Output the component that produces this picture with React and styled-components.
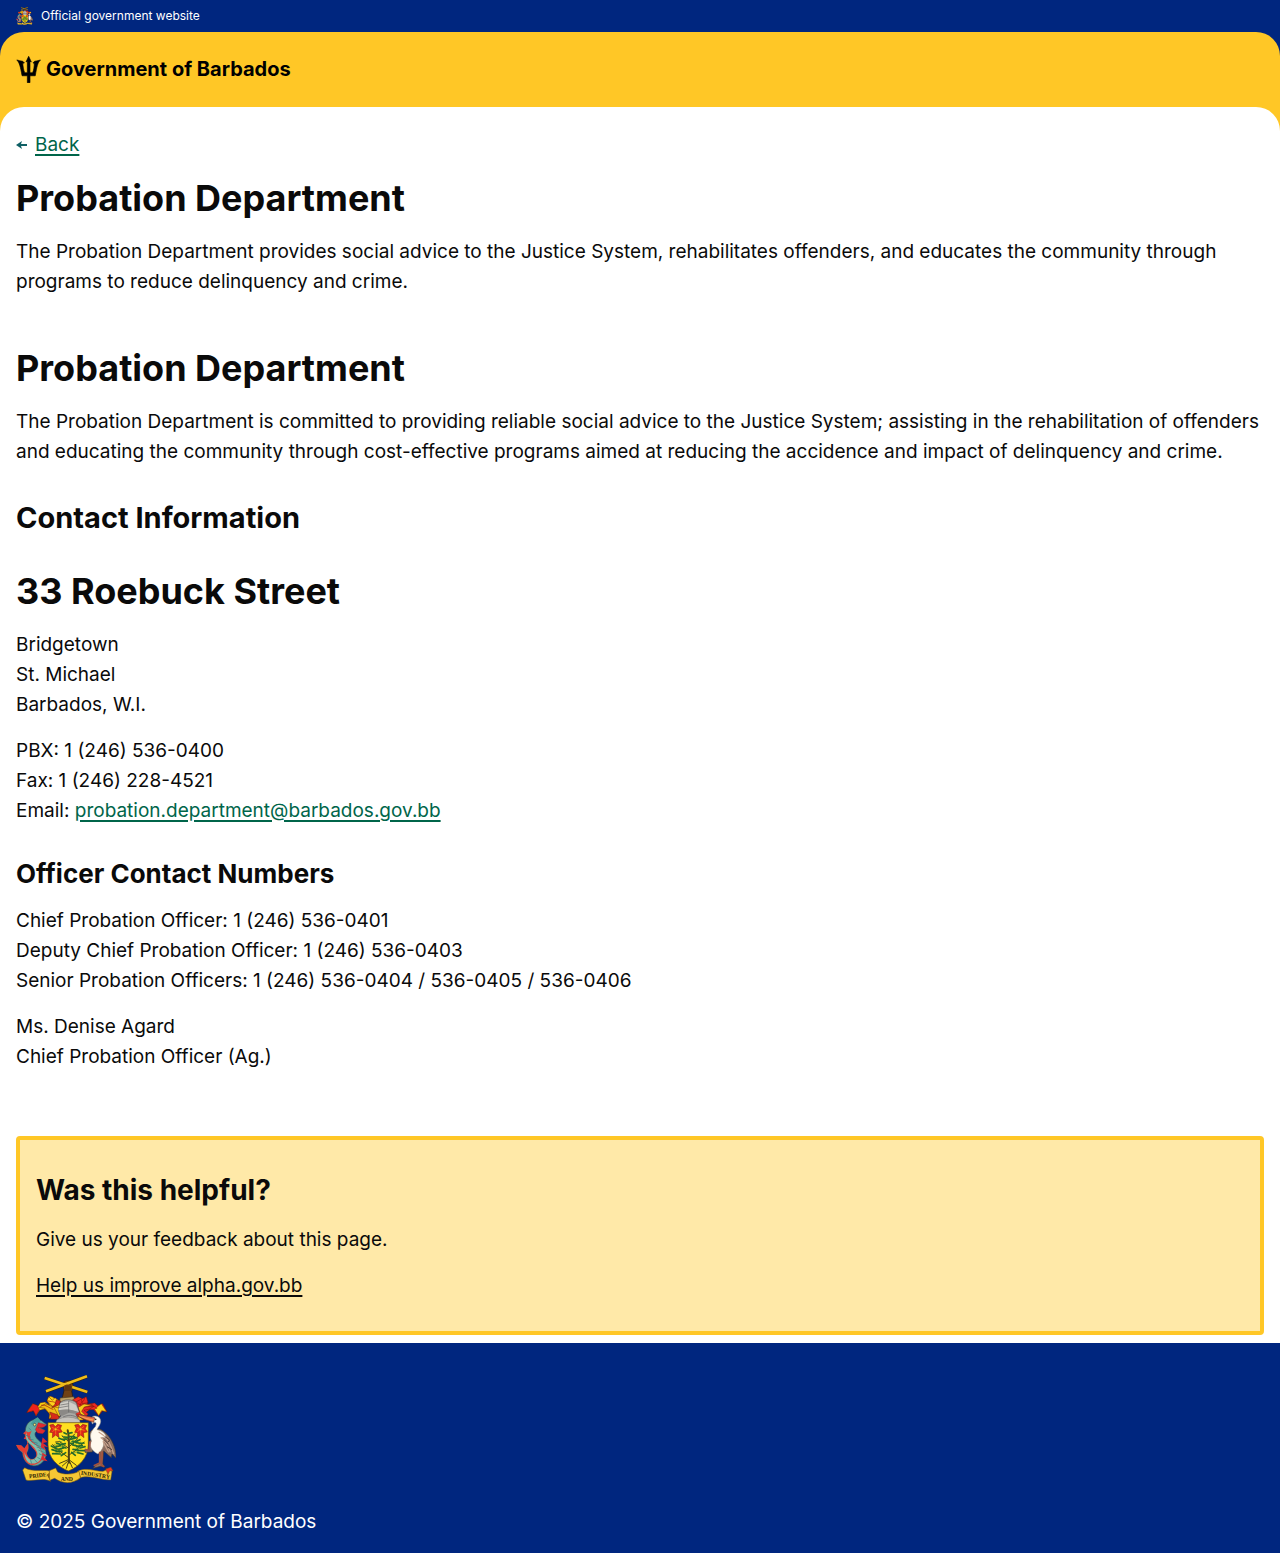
import React from "react";
import styled, { createGlobalStyle } from "styled-components";

const color = {
  navy: "#00267f",
  gold: "#ffc726",
  sand: "#ffe9a8",
  green: "#00654a",
  teal: "#0e5f64",
  ink: "#0a0a0a",
};

const GlobalStyle = createGlobalStyle`
  *, *::before, *::after { box-sizing: border-box; }
  body {
    margin: 0;
    background: #fff;
    color: ${color.ink};
    font-family: Inter, "Open Sans", sans-serif;
    font-size: 19px;
    line-height: 30px;
  }
`;

const Banner = styled.div`
  display: flex;
  align-items: center;
  gap: 8px;
  height: 32px;
  padding: 0 16px;
  background: ${color.navy};
  color: #fff;
  font-size: 12px;
  line-height: 16px;
`;

const HeaderBackdrop = styled.div`
  background: ${color.navy};
`;

const Header = styled.header`
  display: flex;
  padding: 24px 16px;
  background: ${color.gold};
  border-radius: 24px 24px 0 0;
`;

const Brand = styled.a`
  display: flex;
  align-items: center;
  gap: 5px;
  color: #000;
  font-size: 20px;
  font-weight: 700;
  line-height: 27px;
  text-decoration: none;
`;

const MainBackdrop = styled.div`
  background: ${color.gold};
`;

const Main = styled.main`
  padding: 24px 16px 8px;
  background: #fff;
  border-radius: 24px 24px 0 0;
`;

const Link = styled.a`
  color: ${(p) => (p.$plain ? color.ink : color.green)};
  text-decoration: underline;
  text-decoration-thickness: 2px;
  text-underline-offset: 3px;
`;

const BackNav = styled.nav`
  display: flex;
  align-items: center;
  gap: 8px;
  line-height: 28px;
  margin-bottom: 16px;
`;

const PageIntro = styled.section`
  margin-bottom: 48px;
`;

const Article = styled.article`
  margin-bottom: 64px;
`;

const Title = styled.h1`
  margin: 0 0 16px;
  font-size: 36px;
  font-weight: 700;
  line-height: 46px;
`;

const Heading = styled.h2`
  margin: ${(p) => (p.$compact ? "0 0 16px" : "32px 0")};
  font-size: ${(p) => (p.$compact ? "28px" : "29px")};
  font-weight: 700;
  line-height: 37px;
`;

const Subheading = styled.h3`
  margin: 32px 0 16px;
  font-size: 26px;
  font-weight: 700;
  line-height: 32px;
`;

const Text = styled.p`
  margin: 0 0 16px;
  &:last-child { margin-bottom: 0; }
`;

const Feedback = styled.aside`
  padding: 32px 16px 30px;
  background: ${color.sand};
  border: 4px solid ${color.gold};
  border-radius: 4px;
`;

const Footer = styled.footer`
  display: flex;
  flex-direction: column;
  align-items: flex-start;
  gap: 24px;
  padding: 32px 16px 16px;
  background: ${color.navy};
  color: #fff;
`;

const Drawing = styled.svg`
  display: block;
  flex: none;
`;

const Motto = styled.text`
  font: 700 17px "Liberation Serif", serif;
  fill: #2b1d04;
`;

function Trident() {
  return (
    <Drawing width="25" height="27" viewBox="48 168 75 82" aria-hidden="true">
      <path
        d="M86 169 L94 186 L90 184 V219 H98 C102 210 103 200 103 190 L99 189 L104 184 C111 183 118 181 122 180 C113 188 111 200 106 228 H90 V249 H82 V228 H66 C61 200 58 188 50 180 C54 181 61 183 68 184 L73 189 L68 190 C69 200 70 210 74 219 H82 V184 L78 186 Z"
        stroke="#000"
        strokeWidth="2"
      />
    </Drawing>
  );
}

function Arrow() {
  return (
    <Drawing width="11" height="8" viewBox="0 0 11 8" aria-hidden="true">
      <path d="M0 4 L6 0 L5 3 H11 V5 H5 L6 8 Z" fill={color.teal} />
    </Drawing>
  );
}

function Crest({ width, height, label }) {
  return (
    <Drawing width={width} height={height} viewBox="18 15 300 324" role="img" aria-label={label}>
      {/* crossed sugar canes held in a fist */}
      <path d="M159 38 C163 31 184 29 188 38 L189 53 L185 63 L190 90 H155 L162 62 Z" fill="#704114" stroke="#241507" strokeWidth="2" />
      <path d="M104 24 L232 66 M108 64 L231 19" fill="none" stroke="#382100" strokeWidth="10" />
      <path d="M104 24 L232 66 M108 64 L231 19" fill="none" stroke="#eebd1b" strokeWidth="8" />
      <path d="M162 48 C163 42 186 42 187 48 L185 62 H164 Z" fill="#704114" />
      <path d="M168 47 V57 M174 46 V57 M180 47 V57 M163 60 H185" stroke="#2b1609" strokeWidth="1.5" />
      <path d="M150 84 L191 80 L197 93 L149 99 Z" fill="#bca064" stroke="#4b3920" strokeWidth="2" />

      {/* mantling */}
      <g stroke="#5c1608" strokeWidth="1.4">
        <path d="M149 91 C135 89 130 79 119 78 L111 91 L119 106 L105 96 L91 98 L84 109 L68 101 L51 126 L72 122 L78 137 L89 121 L105 117 L119 132 L117 147 L151 139 Z" fill="#f8cf12" />
        <path d="M69 101 L50 128 L70 122 L78 137 L88 119 L82 106 Z" fill="#ed231d" />
        <path d="M116 80 L111 92 L126 108 L146 114 L150 94 L135 83 L127 91 Z" fill="#ffd41c" />
        <path d="M107 101 L88 112 L105 115 L119 132 L117 146 L146 139 L132 112 Z" fill="#f0bd16" />
        <path d="M139 89 L152 94 L145 106 L125 113 L135 103 Z M119 126 L142 134 L151 148 L121 148 L124 139 Z" fill="#d72b1b" />
        <path d="M188 89 L205 80 L217 86 L229 80 L234 97 L219 109 L239 101 L254 99 L263 107 L278 101 L291 126 L278 122 L266 137 L251 119 L238 119 L222 132 L230 150 L198 144 Z" fill="#ef2a21" />
        <path d="M274 101 L290 125 L275 122 L266 137 L254 118 L264 109 Z" fill="#ffd41c" />
        <path d="M198 96 L214 87 L217 101 L235 98 L221 111 L252 109 L239 117 L222 121 L235 132 L223 145 L205 119 Z" fill="#e92724" />
        <path d="M204 112 L222 102 L248 105 L223 111 L215 124 L229 139 L212 133 Z M199 139 L211 142 L222 150 L199 151 Z" fill="#f5c719" />
      </g>
      <path d="M190 91 C200 93 202 105 215 104 M224 84 C221 99 207 98 211 109 M242 103 C250 111 257 108 261 117 M112 91 C123 98 133 91 139 103 M93 106 C108 102 116 115 130 118" fill="none" stroke="#9d0e0b" strokeWidth="2" />

      {/* helmet */}
      <path d="M151 98 C161 87 185 86 199 98 L207 123 L197 131 L209 155 H138 L152 139 L145 121 Z" fill="#aaa9a5" stroke="#51504f" strokeWidth="2" />
      <path d="M151 100 L145 121 L175 118 L207 127 L197 105 L174 94 Z" fill="#d1cec8" />
      <path d="M145 121 C165 116 190 118 207 127 L193 131 L177 128 L154 139 Z" fill="#8b8986" />
      <path d="M147 113 L176 108 M151 105 L176 101 M159 141 C176 134 189 134 203 144 M176 93 V127" fill="none" stroke="#656565" strokeWidth="2" />
      <path d="M141 149 Q173 134 208 149 L211 159 H137 Z" fill="#c6c3bd" stroke="#72706b" />

      {/* shield */}
      <path d="M114 158 H235 V224 C235 263 206 291 175 303 C143 290 114 264 114 224 Z" fill="#ffdf20" stroke="#664b0a" strokeWidth="2" />
      {[0, 75].map((x) => (
        <g key={x} transform={`translate(${x} 0)`}>
          <path d="M119 165 L130 163 L136 170 L143 163 L155 166 L151 176 L157 186 L145 188 L147 203 L137 195 L127 203 L128 188 L119 187 L124 176 Z" fill="#df261c" stroke="#7e1b12" strokeWidth="1.5" />
          <path d="M125 172 L149 182 M147 169 L127 185 M137 171 V194 M130 179 H145" stroke="#ff8a1c" strokeWidth="2" />
          <circle cx="137" cy="178" r="4" fill="#ffc51c" stroke="#8c2010" />
        </g>
      ))}

      {/* bearded fig tree */}
      <g fill="none" stroke="#4d4218" strokeLinecap="round">
        <path d="M173 181 C180 208 175 230 177 278" strokeWidth="6" />
        <path d="M177 264 L150 244 L128 224 M177 255 L199 240 L222 216 M176 235 L149 215 L137 216 M177 231 L203 206 M176 214 L156 198 M175 213 L194 192" strokeWidth="3" />
        <path d="M177 270 L157 288 M177 271 L169 295 M177 270 L187 293 M177 269 L199 286 M177 268 L149 280" strokeWidth="3" />
      </g>
      <g fill="none" stroke="#246b2b" strokeWidth="5" strokeLinecap="round">
        <path d="M170 192 L162 188 M173 202 L163 201 M172 207 L156 208 M163 211 L147 205 M166 221 L151 224 M159 225 L140 220 M151 227 L137 231 M161 234 L145 238 M156 243 L138 245 M152 252 L128 251 M149 246 L126 239 M140 237 L124 228 M167 248 L154 257 M168 234 L158 231" />
        <path d="M176 190 L186 188 M178 200 L194 200 M181 208 L200 203 M187 214 L204 218 M194 216 L210 209 M188 225 L206 229 M200 230 L217 226 M207 221 L222 219 M189 238 L205 240 M201 241 L223 242 M210 234 L225 230 M185 247 L196 256 M203 248 L219 252 M181 220 L190 221" />
      </g>
      <g fill="none" stroke="#36852f" strokeWidth="2">
        <path d="M157 217 L147 213 M144 228 L132 224 M156 238 L136 238 M164 229 L151 231 M182 216 L194 211 M194 223 L213 216 M197 235 L215 233 M188 247 L207 246 M166 203 L157 197" />
      </g>

      {/* dolphin supporter */}
      <path d="M46 181 C47 164 58 151 72 149 L82 143 L90 150 C98 151 102 160 110 163 L102 171 L89 173 L105 181 L100 188 L83 182 C72 187 73 197 83 208 C99 221 111 237 108 258 C103 278 83 293 62 286 C45 278 39 264 37 248 L25 237 L19 225 C29 225 39 229 43 239 C48 231 51 225 54 219 C57 233 55 245 49 250 C51 263 61 272 72 266 C86 258 80 242 67 231 C50 216 41 203 46 181 Z" fill="#63aaa3" stroke="#34464b" strokeWidth="2" />
      <path d="M47 184 L39 190 L48 195 L41 207 L52 208 L51 219 L60 217 C61 234 80 240 79 252 C81 264 69 270 62 267 C52 261 51 252 50 247 L55 235 L54 218 L43 235 L34 226 L18 225 L25 238 L38 247 C40 265 45 276 57 283 C78 290 97 274 99 261 C99 242 86 228 73 219 C58 207 57 197 65 183 L56 187 Z" fill="#e43e34" />
      <path d="M51 185 C47 202 62 216 77 224 C94 237 102 252 91 269 C83 280 67 284 56 278 C47 271 44 260 43 246 C50 265 63 276 76 265 C90 253 78 237 62 223 C48 212 45 199 51 185 Z" fill="#82c0af" />
      <path d="M71 149 L83 142 L91 151 L88 159 L77 157 L69 164 L62 162 Z" fill="#439c9b" />
      <path d="M85 158 L98 161 L110 165 L99 172 L84 173 L106 182 L98 191 L83 189 L76 179 Z" fill="#df2930" stroke="#851b24" />
      <circle cx="74" cy="164" r="4" fill="#ffe575" stroke="#173d4d" strokeWidth="2" />
      <path d="M98 202 L112 216 L99 219 L114 231 L100 229 L109 242 L92 232 Z M98 248 L111 257 L101 260 L113 274 L93 270 Z" fill="#d82b31" />
      <path d="M56 174 L64 181 M48 196 L63 202 M54 206 L71 210 M63 214 L83 220 M73 222 L92 230 M80 231 L101 238 M85 240 L104 248 M87 251 L102 258 M82 262 L95 269 M73 268 L83 279 M61 268 L65 281" stroke="#327d86" strokeWidth="2" />

      {/* pelican supporter */}
      <path d="M247 180 C236 185 239 197 243 207 L236 220 L239 240 L225 239 L225 247 L247 246 L251 226 L262 235 L270 246 L269 280 L258 285 L249 295 L272 289 L285 291 L278 281 L281 243 L304 263 L306 252 L318 265 C320 227 297 190 270 177 Z" fill="#8d6e60" stroke="#373431" strokeWidth="2" />
      <path d="M242 147 C246 135 262 136 269 144 C278 158 264 171 261 179 C276 181 290 193 288 204 L276 202 C287 220 279 239 264 252 C244 242 236 226 245 213 C237 196 244 182 256 170 C263 157 255 154 247 162 Z" fill="#fff9ee" stroke="#a29a8d" strokeWidth="1.5" />
      <path d="M254 143 L218 136 L202 134 L209 141 L230 151 L251 157 Z" fill="#ef6948" stroke="#543326" strokeWidth="2" />
      <path d="M207 137 C223 145 238 148 251 150" fill="none" stroke="#fbd04b" strokeWidth="2" />
      <circle cx="257" cy="148" r="2.5" fill="#211e1b" />
      <path d="M266 186 C289 198 300 218 311 252 M272 202 C288 211 294 228 301 247 M279 214 C284 227 290 235 296 247" fill="none" stroke="#c5a18b" strokeWidth="4" />
      <path d="M285 200 L299 210 L294 216 M281 208 L294 221 M291 230 L306 239" fill="none" stroke="#513f38" strokeWidth="3" />
      <path d="M240 214 L237 242 L224 238 M269 245 V279 L251 287 M277 244 L274 286 L283 290" fill="none" stroke="#a3513d" strokeWidth="5" />

      {/* motto scroll */}
      <g stroke="#755408" strokeWidth="1.5">
        <path d="M38 300 L44 293 C66 307 102 298 119 303 L123 319 L112 314 L122 334 C101 321 66 336 48 330 Z" fill="#f6c734" />
        <path d="M203 304 C227 290 259 305 279 304 L300 295 L306 305 L302 330 C269 330 233 312 208 325 L198 318 Z" fill="#f6c734" />
        <path d="M112 314 L124 304 L122 330 Z M205 304 L212 323 L202 331 Z" fill="#93660d" />
        <path d="M118 302 L137 294 L143 306 C163 315 188 314 207 304 L211 323 C187 343 158 342 134 325 L119 331 Z" fill="#f6c734" />
        <path d="M287 297 L303 292 L309 303 L299 302 L294 313 Z" fill="#ed3324" />
      </g>
      <Motto x="58" y="325" transform="rotate(-7 58 325)">PRIDE</Motto>
      <Motto x="152" y="332">AND</Motto>
      <Motto x="212" y="314" transform="rotate(8 212 314)">INDUSTRY</Motto>
    </Drawing>
  );
}

export default function App() {
  return (
    <>
      <GlobalStyle />
      <Banner>
        <Crest width="17" height="18" label="Coat of arms" />
        <span>Official government website</span>
      </Banner>
      <HeaderBackdrop>
        <Header>
          <Brand href="#home">
            <Trident />
            Government of Barbados
          </Brand>
        </Header>
      </HeaderBackdrop>
      <MainBackdrop>
        <Main>
          <BackNav aria-label="Back">
            <Arrow />
            <Link href="#back">Back</Link>
          </BackNav>
          <PageIntro>
            <Title>Probation Department</Title>
            <Text>
              The Probation Department provides social advice to the Justice System, rehabilitates
              offenders, and educates the community through programs to reduce delinquency and crime.
            </Text>
          </PageIntro>
          <Article>
            <Title>Probation Department</Title>
            <Text>
              The Probation Department is committed to providing reliable social advice to the
              Justice System; assisting in the rehabilitation of offenders and educating the
              community through cost-effective programs aimed at reducing the accidence and impact
              of delinquency and crime.
            </Text>
            <Heading>Contact Information</Heading>
            <Title>33 Roebuck Street</Title>
            <Text>
              Bridgetown
              <br />
              St. Michael
              <br />
              Barbados, W.I.
            </Text>
            <Text>
              PBX: 1 (246) 536-0400
              <br />
              Fax: 1 (246) 228-4521
              <br />
              Email:{" "}
              <Link href="mailto:probation.department@barbados.gov.bb">
                probation.department@barbados.gov.bb
              </Link>
            </Text>
            <Subheading>Officer Contact Numbers</Subheading>
            <Text>
              Chief Probation Officer: 1 (246) 536-0401
              <br />
              Deputy Chief Probation Officer: 1 (246) 536-0403
              <br />
              Senior Probation Officers: 1 (246) 536-0404 / 536-0405 / 536-0406
            </Text>
            <Text>
              Ms. Denise Agard
              <br />
              Chief Probation Officer (Ag.)
            </Text>
          </Article>
          <Feedback>
            <Heading $compact>Was this helpful?</Heading>
            <Text>Give us your feedback about this page.</Text>
            <Text>
              <Link $plain href="#feedback">Help us improve alpha.gov.bb</Link>
            </Text>
          </Feedback>
        </Main>
      </MainBackdrop>
      <Footer>
        <Crest width="100" height="108" label="Coat of arms of Barbados" />
        <Text>© 2025 Government of Barbados</Text>
      </Footer>
    </>
  );
}
